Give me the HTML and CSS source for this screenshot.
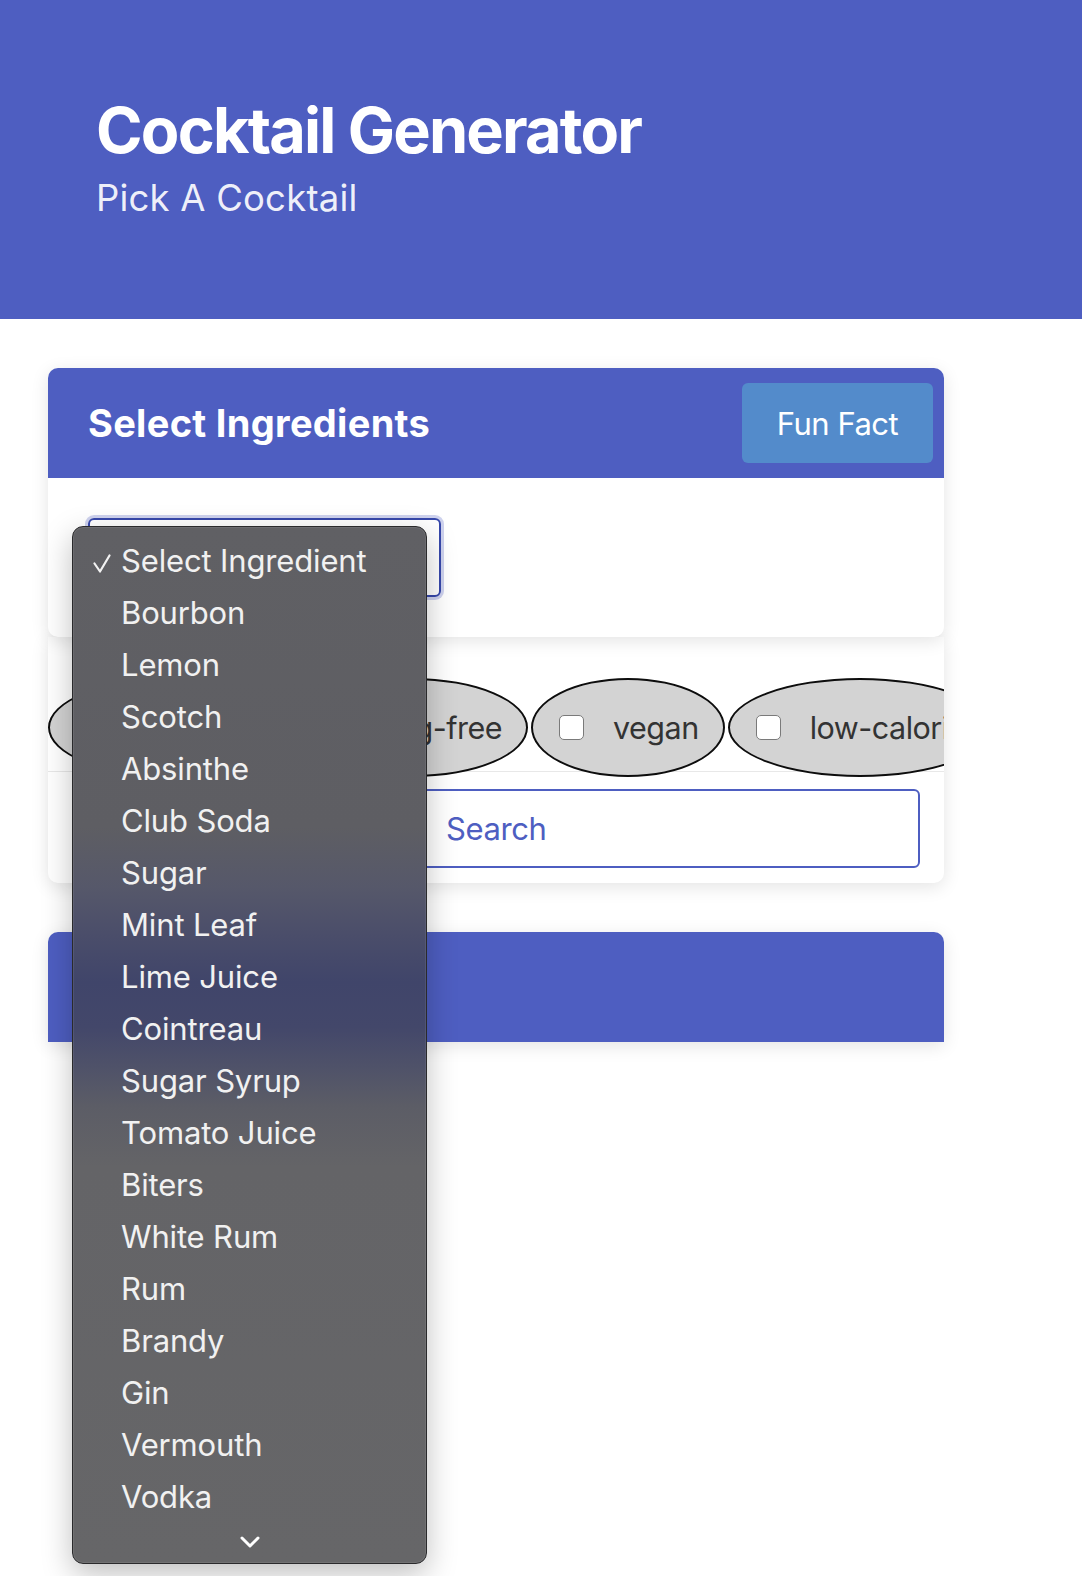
FILE: index.html
```html
<!DOCTYPE html>
<html lang="en">
<head>
<meta charset="utf-8">
<title>Cocktail Generator</title>
<link rel="stylesheet" href="styles.css">
</head>
<body>
<header class="hero">
  <h1 class="hero-title">Cocktail Generator</h1>
  <p class="hero-sub">Pick A Cocktail</p>
</header>

<main class="main">
  <section class="card card-top">
    <div class="card-head">
      <h2 class="card-title">Select Ingredients</h2>
      <button class="btn-fun" type="button">Fun Fact</button>
    </div>
    <div class="card-body">
      <div class="select-box">
        <div class="dropdown">
          <ul class="dd-list">
            <li class="dd-item dd-checked">
              <svg class="dd-check" width="18" height="20" viewBox="0 0 18 20"><path d="M1.5 9.5 L7 17.5 L16.5 1.5" fill="none" stroke="#f2f2f2" stroke-width="2.2" stroke-linecap="round" stroke-linejoin="round"/></svg>
              Select Ingredient</li>
            <li class="dd-item">Bourbon</li>
            <li class="dd-item">Lemon</li>
            <li class="dd-item">Scotch</li>
            <li class="dd-item">Absinthe</li>
            <li class="dd-item">Club Soda</li>
            <li class="dd-item">Sugar</li>
            <li class="dd-item">Mint Leaf</li>
            <li class="dd-item">Lime Juice</li>
            <li class="dd-item">Cointreau</li>
            <li class="dd-item">Sugar Syrup</li>
            <li class="dd-item">Tomato Juice</li>
            <li class="dd-item">Biters</li>
            <li class="dd-item">White Rum</li>
            <li class="dd-item">Rum</li>
            <li class="dd-item">Brandy</li>
            <li class="dd-item">Gin</li>
            <li class="dd-item">Vermouth</li>
            <li class="dd-item">Vodka</li>
          </ul>
          <div class="dd-more">
            <svg width="20" height="12" viewBox="0 0 20 12"><path d="M2 2 L10 10 L18 2" fill="none" stroke="#ffffff" stroke-width="3" stroke-linecap="round" stroke-linejoin="round"/></svg>
          </div>
        </div>
      </div>
    </div>
  </section>

  <section class="card card-filters">
    <div class="pills">
      <label class="pill"><span class="box"></span><span class="pill-text">dairy-free</span></label>
      <label class="pill"><span class="box"></span><span class="pill-text">egg-free</span></label>
      <label class="pill"><span class="box"></span><span class="pill-text">vegan</span></label>
      <label class="pill"><span class="box"></span><span class="pill-text">low-calorie</span></label>
    </div>
    <form class="search-row">
      <input class="search" type="text" placeholder="Search">
    </form>
  </section>

  <section class="card card-result">
    <div class="card-head card-head-solo"></div>
  </section>
</main>
</body>
</html>
```

FILE: styles.css
```css
* { box-sizing: border-box; }

html, body {
  min-height: 100vh;
}

body {
  margin: 0;
  font-family: Inter, "Noto Sans", sans-serif;
  background: #ffffff;
  color: #222;
}

.hero {
  background: #4e5ec1;
  height: 319px;
  padding: 93px 0 0 96px;
  color: #ffffff;
}

.hero-title {
  margin: 0;
  font-size: 63px;
  line-height: 1.2;
  font-weight: 700;
  letter-spacing: -1.8px;
}

.hero-sub {
  margin: 8px 0 0 0;
  font-size: 36.5px;
  line-height: 1.2;
  font-weight: 400;
  letter-spacing: 0.2px;
  color: rgba(255, 255, 255, 0.92);
}

.main {
  padding: 49px 0 0 48px;
  width: 944px;
}

.card {
  background: #ffffff;
  border-radius: 10px;
  box-shadow: 0 4px 18px rgba(0, 0, 0, 0.11);
}

.card-top {
  position: relative;
  z-index: 1;
}

.card-head {
  height: 110px;
  background: #4e5ec1;
  border-radius: 10px 10px 0 0;
  display: flex;
  align-items: center;
  justify-content: space-between;
  padding: 0 11px 0 40px;
}

.card-title {
  margin: 0;
  color: #ffffff;
  font-size: 38px;
  font-weight: 700;
  letter-spacing: 0.3px;
}

.btn-fun {
  width: 191px;
  height: 80px;
  border: none;
  border-radius: 6px;
  background: #538bcb;
  color: #ffffff;
  font-family: Inter, "Noto Sans", sans-serif;
  font-size: 31px;
  letter-spacing: -0.5px;
  padding: 0;
}

.card-body {
  padding: 40px;
  height: 159px;
}

.select-box {
  position: relative;
  width: 353px;
  height: 79px;
  border: 2px solid #3748ab;
  border-radius: 6px;
  box-shadow: 0 0 0 3px rgba(78, 94, 193, 0.28);
}

.dropdown {
  position: absolute;
  left: -18px;
  top: 6px;
  width: 355px;
  height: 1038px;
  border: 1px solid #2a2a2c;
  border-radius: 11px;
  background: linear-gradient(180deg,
    #606064 0px,
    #5e5e63 300px,
    #56586a 360px,
    #4a4d6a 410px,
    #40456a 455px,
    #43476a 500px,
    #4f5269 540px,
    #5c5d66 580px,
    #646467 640px,
    #666668 100%);
  box-shadow: 0 10px 30px rgba(0, 0, 0, 0.25), inset 0 0 0 1px rgba(255, 255, 255, 0.08);
  overflow: hidden;
}

.dd-list {
  list-style: none;
  margin: 0;
  padding: 8px 0 0 0;
}

.dd-item {
  position: relative;
  height: 52px;
  line-height: 52px;
  padding-left: 48px;
  font-size: 31px;
  letter-spacing: -0.15px;
  color: #f1f1f1;
  white-space: nowrap;
}

.dd-check {
  position: absolute;
  left: 20px;
  top: 19px;
}

.dd-more {
  display: flex;
  justify-content: center;
  padding-top: 13px;
}

.card-filters {
  border-radius: 0 0 10px 10px;
  overflow: hidden;
  height: 246px;
}

.pills {
  display: flex;
  gap: 3px;
  height: 134px;
  padding-top: 41px;
  white-space: nowrap;
}

.pill {
  flex: none;
  display: flex;
  align-items: center;
  height: 99px;
  padding: 0 24px 0 26px;
  background: #d3d3d3;
  border: 2px solid #0d0d0d;
  border-radius: 50%;
  font-size: 30.5px;
  letter-spacing: -0.5px;
  color: #333;
}

.box {
  width: 25px;
  height: 25px;
  background: #ffffff;
  border: 1.5px solid #7a7a7a;
  border-radius: 5px;
  margin-right: 29px;
}

.search-row {
  margin: 0;
  border-top: 1px solid #e8e8e8;
  padding: 17px 24px 15px 340px;
}

.search {
  display: block;
  width: 100%;
  height: 79px;
  border: 2px solid #4e5ec1;
  border-radius: 6px;
  padding: 0 0 0 56px;
  font-family: Inter, "Noto Sans", sans-serif;
  font-size: 31px;
  letter-spacing: -0.4px;
  color: #4e5ec1;
  background: #fff;
}

.search::placeholder {
  color: #4e5ec1;
}

.card-result {
  margin-top: 49px;
  border-radius: 10px 10px 0 0;
}

.card-head-solo {
  height: 110px;
}
```
